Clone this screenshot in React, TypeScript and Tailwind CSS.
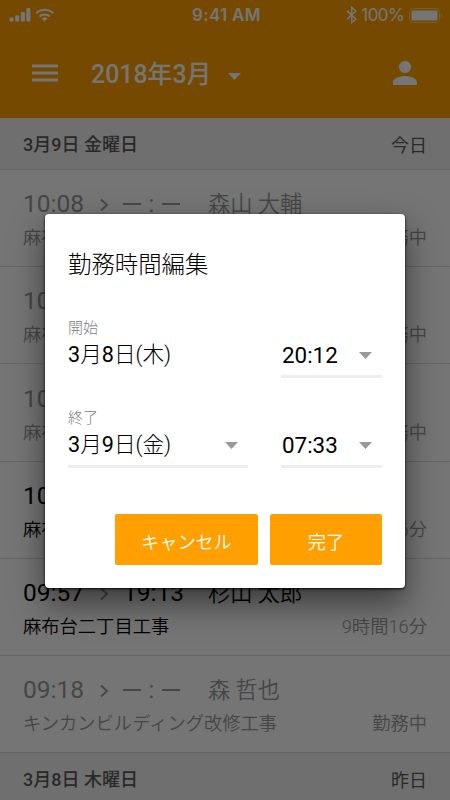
import React from "react";

type Entry = {
  start: string;
  end?: string;
  name: string;
  place: string;
  status: string;
  done?: boolean;
};

const entries: Entry[] = [
  { start: "10:08", name: "森山 大輔", place: "麻布台二丁目工事", status: "勤務中" },
  { start: "10:05", name: "山田 健一", place: "麻布台二丁目工事", status: "勤務中" },
  { start: "10:03", name: "田中 和也", place: "麻布台二丁目工事", status: "勤務中" },
  { start: "10:01", end: "19:07", name: "佐藤 大輔", place: "麻布台二丁目工事", status: "9時間06分", done: true },
  { start: "09:57", end: "19:13", name: "杉山 太郎", place: "麻布台二丁目工事", status: "9時間16分", done: true },
  { start: "09:18", name: "森 哲也", place: "キンカンビルディング改修工事", status: "勤務中" },
];

function Chevron() {
  return (
    <svg className="mt-[2px] block h-4 w-[9px]" viewBox="0 0 9 16" fill="none" stroke="#9e9e9e" strokeWidth="2">
      <path d="M1 2.5L7 8L1 13.5" />
    </svg>
  );
}

function Caret({ className }: { className: string }) {
  return (
    <svg className={"block h-[7px] w-[13px] " + className} viewBox="0 0 13 7" fill="currentColor">
      <path d="M0 0H13L6.5 7Z" />
    </svg>
  );
}

function StatusBar() {
  return (
    <div className="flex h-[30px] items-center pl-[9px] pr-[7px]">
      <svg className="h-[14px] w-[45px]" viewBox="0 0 45 14" fill="white">
        <rect x="0.5" y="9.5" width="4" height="4" rx="1" />
        <rect x="6.2" y="7.3" width="4" height="6.2" rx="1" />
        <rect x="11.9" y="4" width="4" height="9.5" rx="1" />
        <rect x="17.3" y="0" width="4" height="13.5" rx="1" />
        <g fill="none" stroke="white" strokeWidth="2">
          <path d="M27.3 5.3A12 12 0 0 1 44.1 5.3" />
          <path d="M30.5 8.5A7.5 7.5 0 0 1 40.9 8.5" />
        </g>
        <path d="M32.8 10.6A4.2 4.2 0 0 1 38.6 10.6L35.7 13.4Z" />
      </svg>
      <div className="ml-[138px] text-[17px] leading-none font-semibold tracking-[0.3px] whitespace-nowrap font-[Inter,sans-serif]">9:41 AM</div>
      <div className="ml-auto flex items-center">
        <svg className="mr-[4px] h-[18px] w-[11px]" viewBox="0 0 11 18" fill="none" stroke="white" strokeWidth="1.5">
          <path d="M0.8 4.6L9.8 13L5.7 16.6V1.4L9.8 5L0.8 13.4" />
        </svg>
        <span className="text-[17px] leading-none tracking-[-0.6px] font-[Inter,sans-serif]">100%</span>
        <svg className="ml-[5px] h-[15px] w-[34px]" viewBox="0 0 34 15">
          <rect x="0.5" y="0.5" width="30" height="14" rx="4" fill="none" stroke="white" strokeOpacity=".45" />
          <rect x="2.5" y="2.5" width="26" height="10" rx="1.8" fill="white" />
          <path d="M32 5.2Q34 7.5 32 9.8Z" fill="white" fillOpacity=".5" />
        </svg>
      </div>
    </div>
  );
}

function DayHeading({ date, label }: { date: string; label: string }) {
  return (
    <div className="flex h-[52px] shrink-0 items-center justify-between border-b border-[#dcdcdc] bg-[#f2f2f2] px-[23px] text-[#5a5a5a]">
      <span className="pt-[2px] text-[18px] font-medium">{date}</span>
      <span className="pt-[4px] text-[18px]">{label}</span>
    </div>
  );
}

function Row({ e }: { e: Entry }) {
  return (
    <div className={"h-[97.2px] shrink-0 border-b border-[#dcdcdc] px-[23px] pt-[18px] " + (e.done ? "text-black" : "text-[#999999]")}>
      <div className="flex h-[32px] items-center whitespace-nowrap">
        <span className="w-[77px] pt-px text-[24.5px]">{e.start}</span>
        <Chevron />
        <div className="ml-[14px] w-[85px]">
          {e.end ? (
            <span className="block pt-px text-[24.5px]">{e.end}</span>
          ) : (
            <div className="flex w-[57px] items-center justify-between">
              <i className="h-[1.5px] w-[18px] bg-[#999999]" />
              <span className="text-[24px] leading-none">:</span>
              <i className="h-[1.5px] w-[18px] bg-[#999999]" />
            </div>
          )}
        </div>
        <span className="pt-px text-[22.2px] font-[350]">{e.name}</span>
      </div>
      <div className="mt-[5px] flex h-[26px] items-center justify-between text-[18.3px] font-[350]">
        <span className="whitespace-nowrap">{e.place}</span>
        <span className="text-[#999999]">{e.status}</span>
      </div>
    </div>
  );
}

function DateText({ month, day, weekday }: { month: number; day: number; weekday: string }) {
  return (
    <span className="font-light whitespace-nowrap">
      <span className="font-normal">{month}</span>月<span className="font-normal">{day}</span>日({weekday})
    </span>
  );
}

function Select({ children, className }: { children: React.ReactNode; className: string }) {
  return (
    <div className={"flex h-[36px] items-center justify-between border-b-[3px] border-[#eeeeee] pr-[10px] pb-[8px] " + className}>
      <span>{children}</span>
      <Caret className="mt-[2px] text-[#999999]" />
    </div>
  );
}

function EditDialog() {
  return (
    <div className="h-[374px] w-[360px] rounded-[4px] bg-white px-[23px] pt-[34px] text-[21.6px] leading-[26px] text-black shadow-[0_15px_32px_rgba(0,0,0,0.5),0_1px_3px_rgba(0,0,0,0.9)]">
      <h2 className="h-[34px] text-[23.4px] leading-[34px] font-light">勤務時間編集</h2>
      <div className="mt-[36px] h-[20px] text-[15px] leading-[20px] font-light text-[#808080]">開始</div>
      <div className="mt-[4px] flex justify-between">
        <div className="flex h-[33px] items-center pb-[8px]">
          <DateText month={3} day={8} weekday="木" />
        </div>
        <Select className="w-[101px] pl-px text-[22.4px]">20:12</Select>
      </div>
      <div className="mt-[30px] h-[20px] text-[15px] leading-[20px] font-light text-[#808080]">終了</div>
      <div className="mt-[4px] flex justify-between">
        <Select className="w-[180px]">
          <DateText month={3} day={9} weekday="金" />
        </Select>
        <Select className="w-[101px] pl-px text-[22.4px]">07:33</Select>
      </div>
      <div className="mt-[46px] flex justify-end gap-[12px] text-[18.2px] font-[350] text-white">
        <button className="h-[51px] w-[143px] rounded-[2px] bg-[#ffa000] pt-1.5">キャンセル</button>
        <button className="h-[51px] w-[112px] rounded-[2px] bg-[#ffa000] pt-1.5">完了</button>
      </div>
    </div>
  );
}

export default function App() {
  return (
    <div className="relative h-[800px] w-[450px] overflow-hidden bg-white font-[Roboto,'Noto_Sans_CJK_JP',sans-serif]">
      <header className="h-[118px] bg-[#ffa000] text-white">
        <StatusBar />
        <div className="flex h-[86px] items-center pl-[32px] pr-[33px]">
          <svg className="h-[18px] w-[26px]" viewBox="0 0 26 18" fill="currentColor">
            <path d="M0 0.5H26V3.5H0ZM0 7.5H26V10.5H0ZM0 14.5H26V17.5H0Z" />
          </svg>
          <span className="ml-[33px] pt-[3px] text-[24.9px] font-medium">2018年3月</span>
          <Caret className="ml-[16px] mt-[6px]" />
          <svg className="ml-auto h-[24px] w-[24px]" viewBox="4 4 16 16" fill="currentColor">
            <path d="M12 12c2.21 0 4-1.79 4-4s-1.79-4-4-4-4 1.79-4 4 1.79 4 4 4zm0 2c-2.67 0-8 1.34-8 4v2h16v-2c0-2.66-5.33-4-8-4z" />
          </svg>
        </div>
      </header>
      <main className="flex flex-col">
        <DayHeading date="3月9日 金曜日" label="今日" />
        {entries.map((e) => (
          <Row key={e.start} e={e} />
        ))}
        <DayHeading date="3月8日 木曜日" label="昨日" />
      </main>
      <div className="absolute inset-0 flex justify-center bg-black/54 pt-[214px]">
        <EditDialog />
      </div>
    </div>
  );
}
